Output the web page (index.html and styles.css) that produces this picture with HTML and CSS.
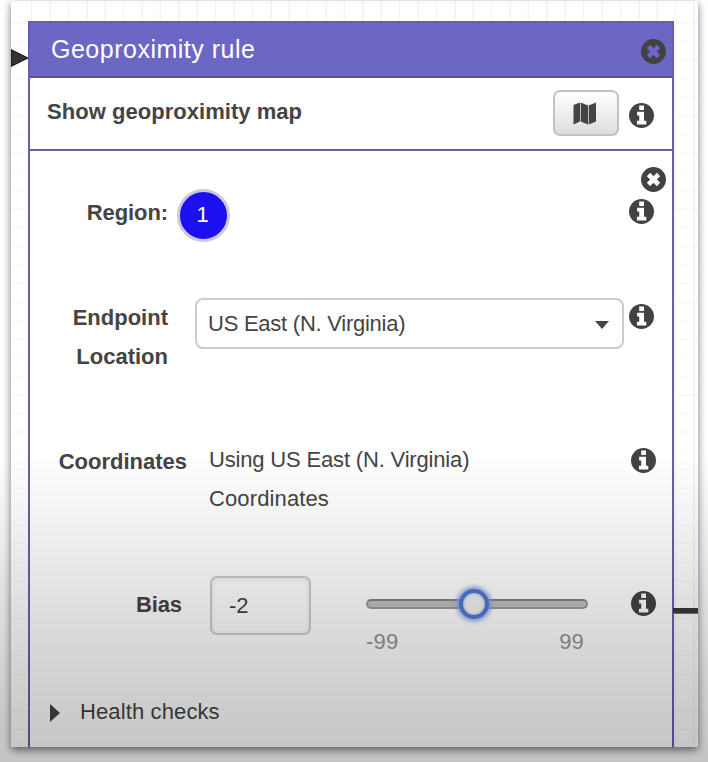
FILE: index.html
```html
<!DOCTYPE html>
<html lang="en">
<head>
<meta charset="utf-8">
<title>Geoproximity rule</title>
<link rel="stylesheet" href="styles.css">
</head>
<body>
<svg class="symbols" aria-hidden="true">
  <symbol id="close" viewBox="0 0 24 24"><path fill-rule="evenodd" d="M12 0a12 12 0 1 0 0 24a12 12 0 1 0 0-24zM8.8 5.6L12 8.8l3.2-3.2 3.2 3.2L15.2 12l3.2 3.2-3.2 3.2L12 15.2l-3.2 3.2-3.2-3.2L8.8 12 5.6 8.8z"/></symbol>
  <symbol id="info" viewBox="0 0 24 24"><path fill-rule="evenodd" d="M12 0a12 12 0 1 0 0 24a12 12 0 1 0 0-24zM9.8 2.4h4.6v4.3H9.8zM7.8 8.4h6.6v8.6h2.2v3.6H7.6V17h2.2v-5.1h-2z"/></symbol>
</svg>
<div class="sheet">
  <svg class="arrow" viewBox="0 0 18 18"><path d="M0 .5L17 9 0 17.5z"/></svg>
  <div class="connector"></div>
  <main class="panel">
    <header class="head"><h1>Geoproximity rule</h1><svg class="icon"><use href="#close"/></svg></header>
    <section class="map-row">
      <h2>Show geoproximity map</h2>
      <button class="map-button" aria-label="Map"><svg viewBox="0 0 24 23"><path d="M.5 3L7 .5v19L.5 22.5zM7.7 .5l7.3 3v19l-7.3-3zM15.7 3.5l7.3-3v19l-7.3 3z"/></svg></button>
      <svg class="icon"><use href="#info"/></svg>
    </section>
    <section class="region">
      <div class="dismiss"><svg class="icon"><use href="#close"/></svg></div>
      <div class="row region-row"><span class="label">Region:</span><span class="badge">1</span><svg class="icon"><use href="#info"/></svg></div>
      <div class="row endpoint-row"><span class="label">Endpoint Location</span><div class="select"><span>US East (N. Virginia)</span><i class="caret"></i></div><svg class="icon"><use href="#info"/></svg></div>
      <div class="row coord-row"><span class="label">Coordinates</span><span class="value">Using US East (N. Virginia)<br><span class="wide">Coordinates</span></span><svg class="icon"><use href="#info"/></svg></div>
      <div class="row bias-row">
        <span class="label">Bias</span><div class="number">-2</div>
        <div class="slider"><div class="track"><i class="thumb"></i></div><div class="range"><span>-99</span><span>99</span></div></div>
        <svg class="icon"><use href="#info"/></svg>
      </div>
      <div class="health"><i class="disclosure"></i><span class="wide">Health checks</span></div>
    </section>
  </main>
</div>
<div class="shade"></div>
</body>
</html>
```

FILE: styles.css
```css
* { box-sizing: border-box; }
body {
  margin: 0;
  width: 708px;
  height: 762px;
  overflow: hidden;
  position: relative;
  background: #fff;
  color: #444;
  font: 22px/39px "Liberation Sans", Arial, sans-serif;
}
.symbols { position: absolute; width: 0; height: 0; }
.sheet {
  position: relative;
  width: 687px;
  height: 746px;
  margin: 1px 0 0 11px;
  padding: 20px 24px 0 17px;
  background:
    repeating-linear-gradient(90deg, transparent 0 16.4px, #f3f3f3 17.4px 18.4px) 3px 0,
    repeating-linear-gradient(180deg, transparent 0 16.6px, #f8f8f8 17.6px 18.6px) 0 4px,
    #fff;
  box-shadow: 0 3px 8px rgba(0, 0, 0, .55);
}
.arrow { position: absolute; left: 0; top: 48px; width: 18px; height: 18px; fill: #333; stroke: #111; stroke-width: 1; }
.connector { position: absolute; right: 0; top: 607px; width: 25px; height: 6px; background: #393939; border-bottom: 1px solid #777; }
.panel {
  width: 646px;
  height: 726px;
  border: 2px solid #6660aa;
  border-bottom: 0;
  background: #fff;
}
h1, h2 { margin: 0; }
.icon { display: block; flex: none; width: 25px; height: 25px; fill: #424242; }
.head {
  height: 55px;
  padding: 0 6px 0 21px;
  display: flex;
  align-items: center;
  justify-content: space-between;
  background: #6c66c5;
  border-bottom: 2px solid #5850a0;
}
.head h1 { color: #fff; font-size: 25px; font-weight: 400; letter-spacing: .5px; }
.head .icon { margin-top: 3px; }
.map-row {
  height: 73px;
  padding: 12px 18px 0 17px;
  display: flex;
  border-bottom: 2px solid #6660aa;
}
.map-row h2 { font-size: 22px; line-height: 44px; flex: 1; letter-spacing: .04px; }
.map-button {
  width: 66px;
  height: 46px;
  padding: 0;
  display: flex;
  align-items: center;
  justify-content: center;
  border: 2px solid #c2c2c2;
  border-radius: 7px;
  background: linear-gradient(#fff, #ddd);
}
.map-button svg { width: 24px; height: 23px; margin-right: 2px; fill: #444; }
.map-row .icon { margin: 13px 0 0 10px; }
.dismiss { height: 38px; padding: 16px 6px 0 0; display: flex; justify-content: flex-end; }
.row { display: flex; align-items: flex-start; padding-right: 18px; }
.row > .icon { margin-left: auto; }
.label { font-weight: 700; text-align: right; width: 138px; flex: none; }
.region-row { height: 109px; }
.region-row .label { margin-top: 4px; letter-spacing: -.1px; }
.region-row .icon { margin-top: 10px; }
.badge {
  width: 53px;
  height: 53px;
  margin-left: 9px;
  border: 3.5px solid #ccc9d2;
  border-radius: 50%;
  background: #1d10ef;
  color: #fff;
  line-height: 45px;
  text-align: center;
  padding-right: 2px;
}
.endpoint-row { height: 144px; }
.endpoint-row .label { padding-left: 30px; }
.select {
  width: 429px;
  height: 51px;
  margin-left: 27px;
  padding: 0 13px 0 11px;
  display: flex;
  align-items: center;
  justify-content: space-between;
  border: 2px solid #ccc;
  border-radius: 8px;
  background: #fff;
  letter-spacing: -.25px;
}
.caret { border: 7px solid transparent; border-top: 8px solid #444; border-bottom: 0; margin-top: 2px; }
.endpoint-row .icon { margin-top: 6px; }
.coord-row { height: 134px; padding-right: 16px; }
.coord-row .label { width: 157px; }
.value { margin-left: 22px; margin-top: -2px; letter-spacing: -.17px; }
.wide { letter-spacing: .12px; }
.coord-row .icon { margin-top: 6px; }
.bias-row { height: 113px; padding-right: 16px; }
.bias-row .label { width: 152px; margin-top: 9px; letter-spacing: -.1px; }
.number {
  width: 101px;
  height: 59px;
  margin-left: 28px;
  padding-left: 17px;
  line-height: 55px;
  border: 2px solid #ccc;
  border-radius: 7px;
  box-shadow: inset 0 1px 5px rgba(0, 0, 0, .1);
}
.slider { width: 222px; margin: 23px 0 0 55px; }
.track {
  position: relative;
  height: 10px;
  border: 2px solid #9b9b9b;
  border-top-color: #828282;
  border-radius: 5px;
  background: #c0c0c0;
}
.thumb {
  position: absolute;
  left: 91px;
  top: -12px;
  width: 30px;
  height: 30px;
  border: 4px solid #4f79cd;
  border-radius: 50%;
  background: #f2f2f2;
  box-shadow: 0 0 5px 2px #809fe8, inset 0 0 3px #7896e8;
}
.range { display: flex; justify-content: space-between; padding: 13px 4px 0 0; color: #949494; letter-spacing: .2px; }
.bias-row .icon { margin-top: 15px; }
.health { display: flex; align-items: center; padding-left: 20px; height: 44px; }
.disclosure { border: 9px solid transparent; border-left: 10px solid #444; border-right: 0; margin: 3px 20px 0 0; }
.shade {
  position: absolute;
  left: 0;
  top: 0;
  width: 708px;
  height: 762px;
  pointer-events: none;
  background: linear-gradient(rgba(0,0,0,0) 450px, rgba(0,0,0,.05) 520px, rgba(0,0,0,.12) 600px, rgba(0,0,0,.19) 690px, rgba(0,0,0,.23) 762px);
}
```
